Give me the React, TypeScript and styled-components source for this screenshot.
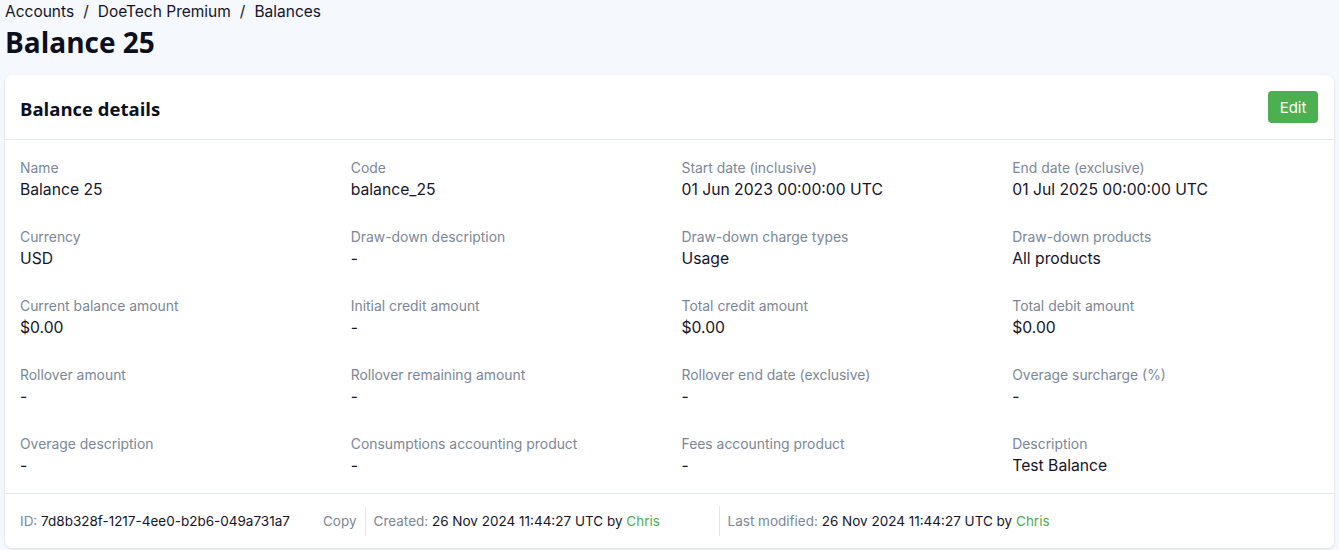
import React from "react";
import styled, { createGlobalStyle } from "styled-components";

const Global = createGlobalStyle`
  html, body { margin: 0; padding: 0; background: #f5f8fc; }
  body { font-family: "Inter", "Liberation Sans", sans-serif; color: #14142b; }
`;

const Page = styled.div`
  padding: 0 5px 3px 5px;
  display: flex;
  flex-direction: column;
`;

const Breadcrumb = styled.nav`
  font-size: 15.5px;
  line-height: 22px;
  margin-top: 1px;
  color: #14142b;
  display: flex;
  gap: 9px;
`;

const Title = styled.h1`
  font-family: "Open Sans", "Liberation Sans", sans-serif;
  font-size: 28px;
  font-weight: 700;
  line-height: 38px;
  margin: 0 0 14px 0;
  color: #0b0f1e;
`;

const Card = styled.section`
  background: #fff;
  border-radius: 7px;
  box-shadow: 0 1px 3px rgba(20, 30, 60, 0.12);
  display: flex;
  flex-direction: column;
`;

const CardHeader = styled.header`
  height: 65px;
  padding: 3px 16px 0 15px;
  box-sizing: border-box;
  display: flex;
  align-items: center;
  justify-content: space-between;
  border-bottom: 1px solid #e3e7ee;
`;

const CardTitle = styled.h2`
  font-family: "Open Sans", "Liberation Sans", sans-serif;
  font-size: 18.5px;
  font-weight: 700;
  margin: 0;
  color: #0b0f1e;
`;

const EditButton = styled.button`
  background: #4caf50;
  color: #fff;
  border: none;
  border-radius: 4px;
  height: 32px;
  width: 50px;
  margin-top: -3px;
  font-family: inherit;
  font-size: 15px;
`;

const Grid = styled.div`
  display: grid;
  grid-template-columns: repeat(4, 1fr);
  column-gap: 24px;
  row-gap: 25px;
  padding: 18px 15px 15px 15px;
`;

const Field = styled.div`
  display: flex;
  flex-direction: column;
`;

const Label = styled.span`
  font-size: 13.9px;
  line-height: 20px;
  color: #7b8798;
`;

const Value = styled.span`
  font-size: 15.7px;
  line-height: 24px;
  color: #14142b;
`;

const Footer = styled.footer`
  border-top: 1px solid #e3e7ee;
  height: 54px;
  padding: 0 15px;
  display: flex;
  align-items: center;
  font-size: 13.5px;
`;

const FooterItem = styled.span<{ $width?: number }>`
  color: #7b8798;
  ${(p) => (p.$width ? `width: ${p.$width}px;` : "")}
`;

const Strong = styled.span`
  color: #14142b;
`;

const UserLink = styled.span`
  color: #4caf50;
`;

const Divider = styled.span`
  width: 1px;
  height: 30px;
  background: #e3e7ee;
  margin: 0 8px 0 8px;
`;

const fields: [string, string][] = [
  ["Name", "Balance 25"],
  ["Code", "balance_25"],
  ["Start date (inclusive)", "01 Jun 2023 00:00:00 UTC"],
  ["End date (exclusive)", "01 Jul 2025 00:00:00 UTC"],
  ["Currency", "USD"],
  ["Draw-down description", "-"],
  ["Draw-down charge types", "Usage"],
  ["Draw-down products", "All products"],
  ["Current balance amount", "$0.00"],
  ["Initial credit amount", "-"],
  ["Total credit amount", "$0.00"],
  ["Total debit amount", "$0.00"],
  ["Rollover amount", "-"],
  ["Rollover remaining amount", "-"],
  ["Rollover end date (exclusive)", "-"],
  ["Overage surcharge (%)", "-"],
  ["Overage description", "-"],
  ["Consumptions accounting product", "-"],
  ["Fees accounting product", "-"],
  ["Description", "Test Balance"],
];

export default function App() {
  return (
    <>
      <Global />
      <Page>
        <Breadcrumb>
          <span>Accounts</span>
          <span>/</span>
          <span>DoeTech Premium</span>
          <span>/</span>
          <span>Balances</span>
        </Breadcrumb>
        <Title>Balance 25</Title>
        <Card>
          <CardHeader>
            <CardTitle>Balance details</CardTitle>
            <EditButton>Edit</EditButton>
          </CardHeader>
          <Grid>
            {fields.map(([l, v]) => (
              <Field key={l}>
                <Label>{l}</Label>
                <Value>{v}</Value>
              </Field>
            ))}
          </Grid>
          <Footer>
            <FooterItem $width={303}>
              ID: <Strong>7d8b328f-1217-4ee0-b2b6-049a731a7</Strong>
            </FooterItem>
            <FooterItem>Copy</FooterItem>
            <Divider />
            <FooterItem $width={337}>
              Created: <Strong>26 Nov 2024 11:44:27 UTC by </Strong>
              <UserLink>Chris</UserLink>
            </FooterItem>
            <Divider />
            <FooterItem>
              Last modified: <Strong>26 Nov 2024 11:44:27 UTC by </Strong>
              <UserLink>Chris</UserLink>
            </FooterItem>
          </Footer>
        </Card>
      </Page>
    </>
  );
}
